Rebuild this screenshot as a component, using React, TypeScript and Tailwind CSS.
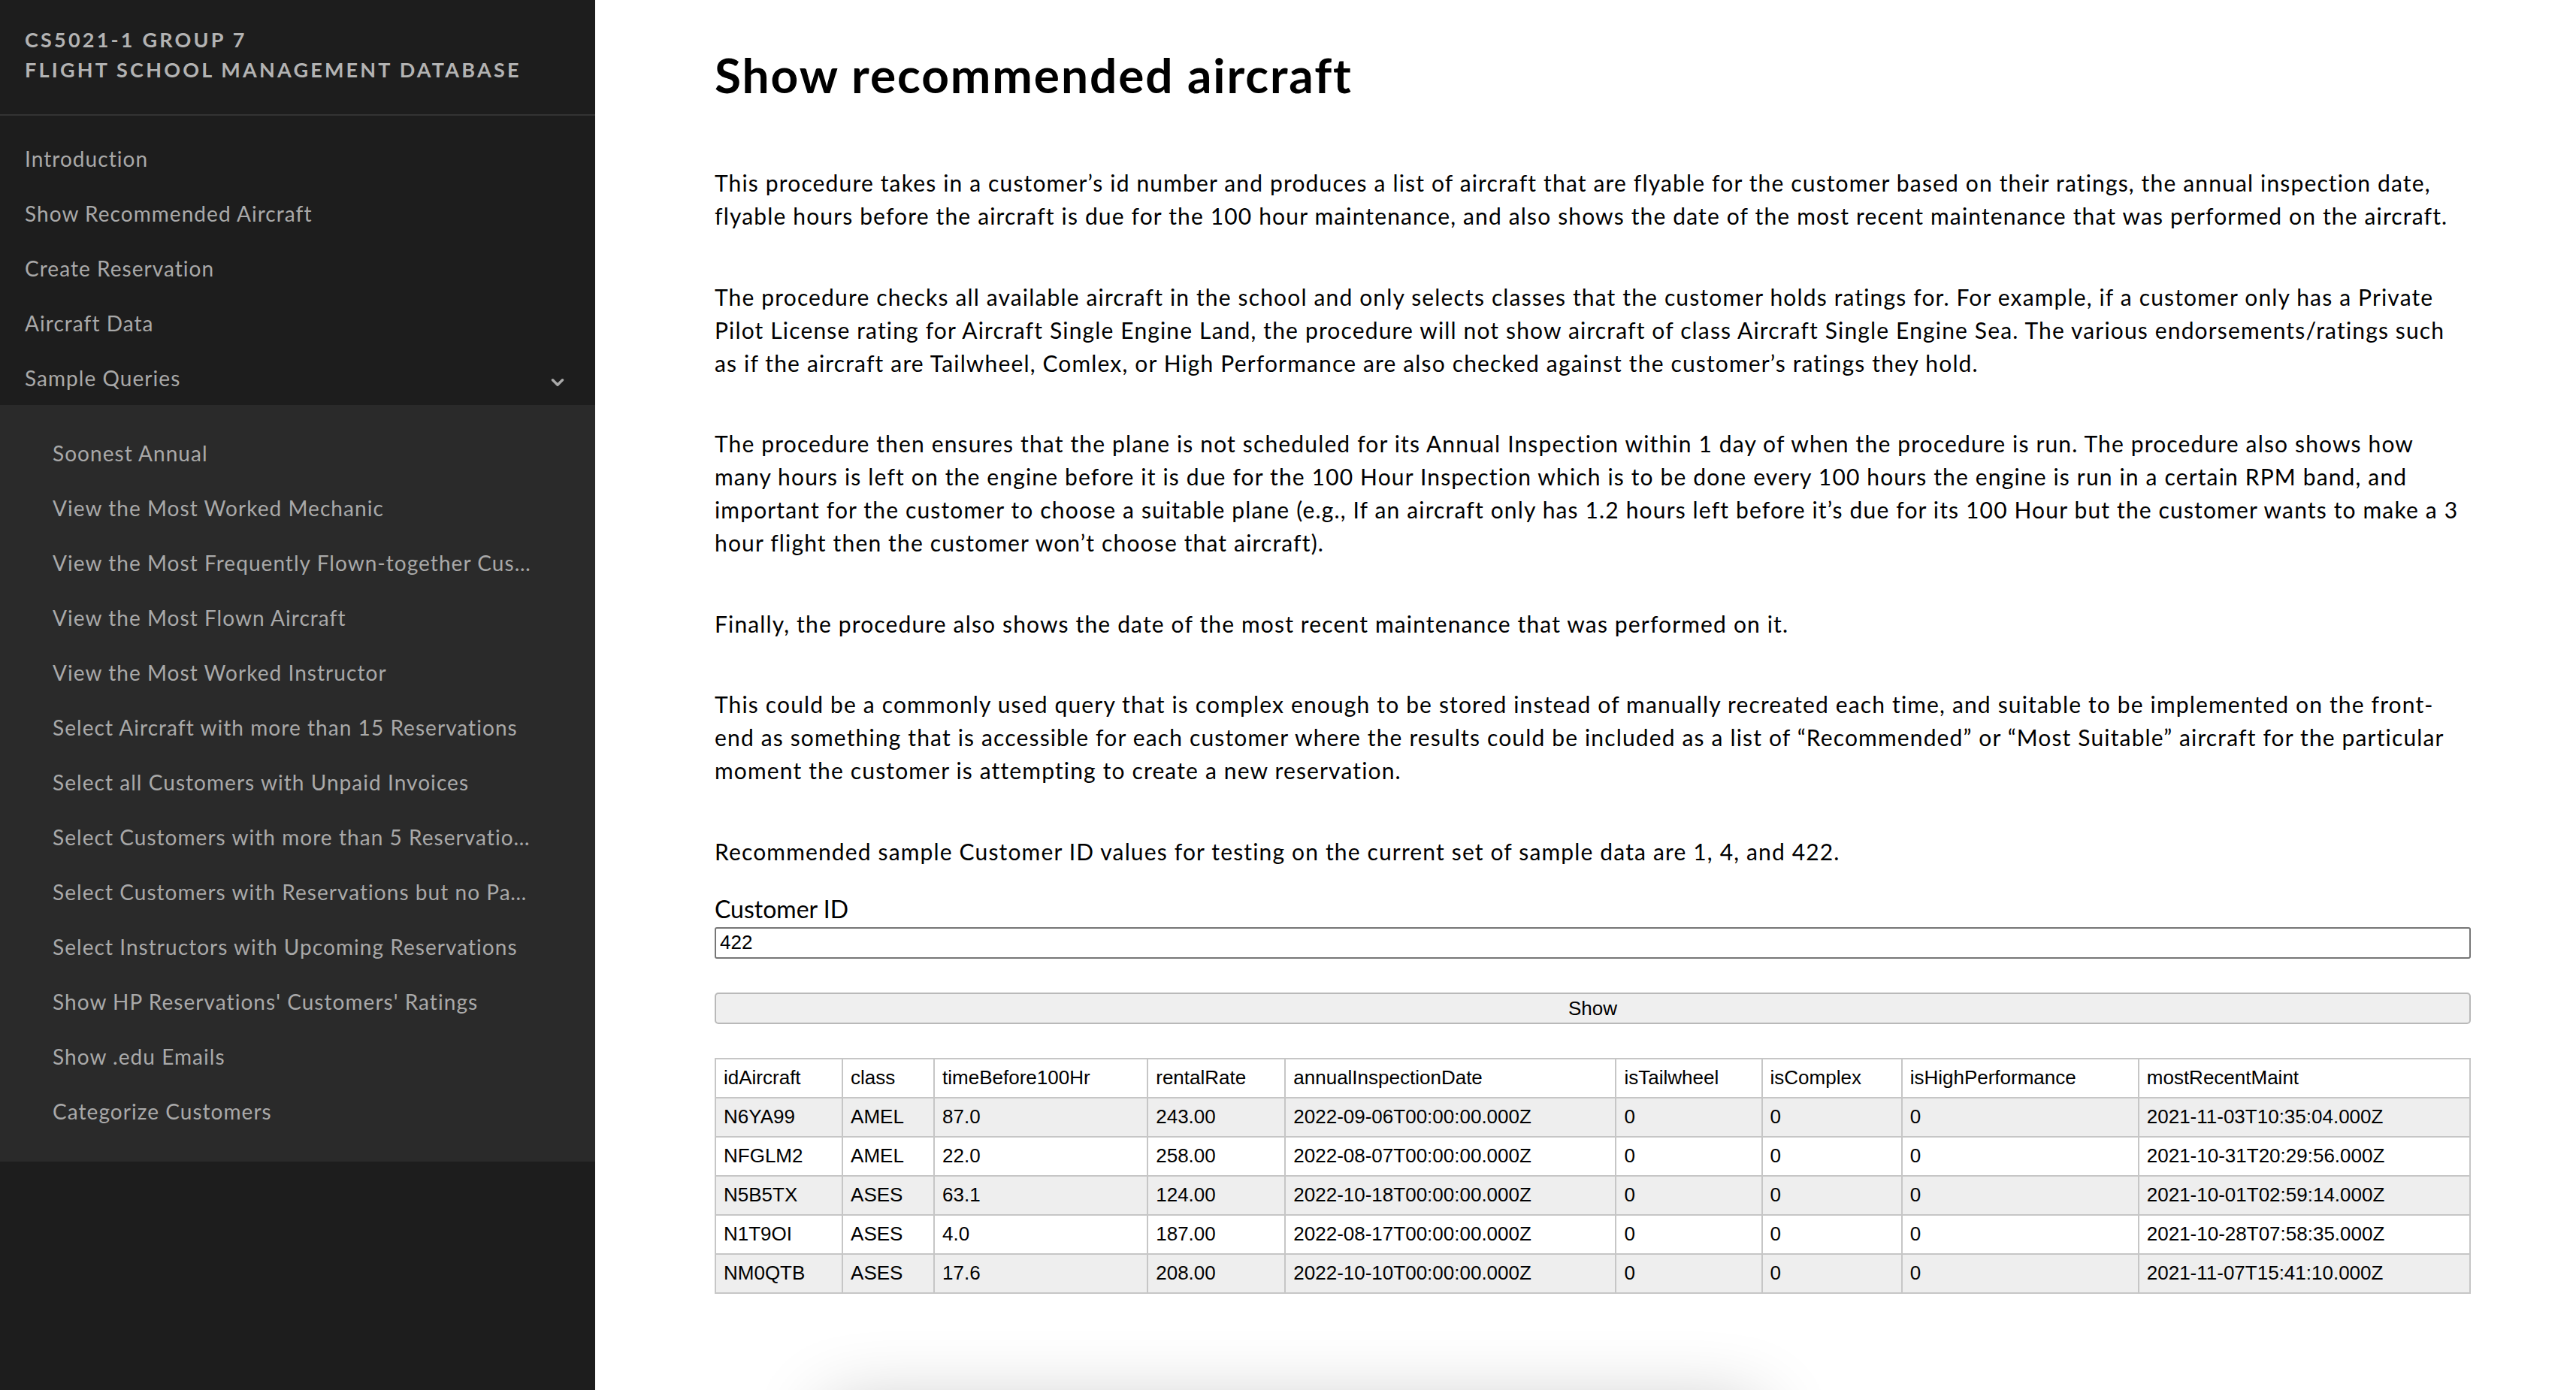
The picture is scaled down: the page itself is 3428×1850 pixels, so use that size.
import { ChevronDown } from "lucide-react";

const topLinks = [
  "Introduction",
  "Show Recommended Aircraft",
  "Create Reservation",
  "Aircraft Data",
];

const sampleQueries = [
  "Soonest Annual",
  "View the Most Worked Mechanic",
  "View the Most Frequently Flown-together Customers",
  "View the Most Flown Aircraft",
  "View the Most Worked Instructor",
  "Select Aircraft with more than 15 Reservations",
  "Select all Customers with Unpaid Invoices",
  "Select Customers with more than 5 Reservations",
  "Select Customers with Reservations but no Payments",
  "Select Instructors with Upcoming Reservations",
  "Show HP Reservations' Customers' Ratings",
  "Show .edu Emails",
  "Categorize Customers",
];

const columns: { key: string; width: number }[] = [
  { key: "idAircraft", width: 169 },
  { key: "class", width: 122 },
  { key: "timeBefore100Hr", width: 284 },
  { key: "rentalRate", width: 183 },
  { key: "annualInspectionDate", width: 440 },
  { key: "isTailwheel", width: 194 },
  { key: "isComplex", width: 186 },
  { key: "isHighPerformance", width: 315 },
  { key: "mostRecentMaint", width: 441 },
];

const rows = [
  ["N6YA99", "AMEL", "87.0", "243.00", "2022-09-06T00:00:00.000Z", "0", "0", "0", "2021-11-03T10:35:04.000Z"],
  ["NFGLM2", "AMEL", "22.0", "258.00", "2022-08-07T00:00:00.000Z", "0", "0", "0", "2021-10-31T20:29:56.000Z"],
  ["N5B5TX", "ASES", "63.1", "124.00", "2022-10-18T00:00:00.000Z", "0", "0", "0", "2021-10-01T02:59:14.000Z"],
  ["N1T9OI", "ASES", "4.0", "187.00", "2022-08-17T00:00:00.000Z", "0", "0", "0", "2021-10-28T07:58:35.000Z"],
  ["NM0QTB", "ASES", "17.6", "208.00", "2022-10-10T00:00:00.000Z", "0", "0", "0", "2021-11-07T15:41:10.000Z"],
];

const paragraphs = [
  "This procedure takes in a customer’s id number and produces a list of aircraft that are flyable for the customer based on their ratings, the annual inspection date, flyable hours before the aircraft is due for the 100 hour maintenance, and also shows the date of the most recent maintenance that was performed on the aircraft.",
  "The procedure checks all available aircraft in the school and only selects classes that the customer holds ratings for. For example, if a customer only has a Private Pilot License rating for Aircraft Single Engine Land, the procedure will not show aircraft of class Aircraft Single Engine Sea. The various endorsements/ratings such as if the aircraft are Tailwheel, Comlex, or High Performance are also checked against the customer’s ratings they hold.",
  "The procedure then ensures that the plane is not scheduled for its Annual Inspection within 1 day of when the procedure is run. The procedure also shows how many hours is left on the engine before it is due for the 100 Hour Inspection which is to be done every 100 hours the engine is run in a certain RPM band, and important for the customer to choose a suitable plane (e.g., If an aircraft only has 1.2 hours left before it’s due for its 100 Hour but the customer wants to make a 3 hour flight then the customer won’t choose that aircraft).",
  "Finally, the procedure also shows the date of the most recent maintenance that was performed on it.",
  "This could be a commonly used query that is complex enough to be stored instead of manually recreated each time, and suitable to be implemented on the front-end as something that is accessible for each customer where the results could be included as a list of “Recommended” or “Most Suitable” aircraft for the particular moment the customer is attempting to create a new reservation.",
];

const cell = "border-2 border-[#c6c6c6] px-[10px] text-left font-normal align-middle";

function Sidebar() {
  return (
    <aside className="w-[792px] shrink-0 bg-[#1d1d1d] h-full">
      <div className="px-[33px] pt-[33px] pb-[39px] border-b-2 border-[#333333] text-[27px] leading-[40px] font-bold uppercase tracking-[3.2px] text-[#b3b3b3]">
        <div>CS5021-1 Group 7</div>
        <div>Flight School Management Database</div>
      </div>
      <nav className="pt-[20px] text-[28px] tracking-[1.05px] text-[#a9a9a9]">
        {topLinks.map((label) => (
          <div key={label} className="h-[73px] flex items-center px-[33px]">
            {label}
          </div>
        ))}
        <div className="h-[73px] flex items-center justify-between pl-[33px] pr-[37px]">
          <span>Sample Queries</span>
          <ChevronDown className="w-[26px] h-[26px] mt-[12px]" strokeWidth={3.2} />
        </div>
        {/* sub-menu of Sample Queries, long titles end in an ellipsis */}
        <div className="bg-[#2a2a2a] pt-[27px] pb-[31px]">
          {sampleQueries.map((label) => (
            <div key={label} className="h-[73px] flex items-center pl-[70px] pr-[84px]">
              <span className="truncate">{label}</span>
            </div>
          ))}
        </div>
      </nav>
    </aside>
  );
}

export default function App() {
  return (
    <div className="flex h-screen overflow-hidden bg-white font-['Lato',sans-serif] text-black">
      <Sidebar />
      <main className="flex-1 min-w-0 pl-[159px] pr-[140px] pt-[61px]">
        <h1 className="text-[64px] leading-[77px] font-bold tracking-[1.9px] mb-[83px]">
          Show recommended aircraft
        </h1>
        {paragraphs.map((p) => (
          <p key={p.slice(0, 24)} className="text-[30px] leading-[44px] tracking-[1.15px] mb-[63.6px]">
            {p}
          </p>
        ))}
        <p className="text-[30px] leading-[44px] tracking-[1.15px] mb-[31px]">
          Recommended sample Customer ID values for testing on the current set of sample data are 1, 4, and 422.
        </p>
        <label className="block">
          <span className="block text-[32px] leading-[48px]">Customer ID</span>
          <input
            defaultValue="422"
            className="block w-full h-[42px] border-2 border-[#767676] rounded-[3px] px-[5px] text-[26px] font-['Liberation_Sans',Arial,sans-serif] outline-none"
          />
        </label>
        <button className="mt-[45px] w-full h-[42px] bg-[#efefef] border-2 border-[#b9b9b9] rounded-[5px] text-[26px] font-['Liberation_Sans',Arial,sans-serif]">
          Show
        </button>
        <table className="mt-[45px] w-full table-fixed border-collapse text-[26px] font-['Liberation_Sans',Arial,sans-serif]">
          <colgroup>
            {columns.map((c) => (
              <col key={c.key} style={{ width: c.width }} />
            ))}
          </colgroup>
          <thead>
            <tr className="h-[52px]">
              {columns.map((c) => (
                <th key={c.key} className={cell}>
                  {c.key}
                </th>
              ))}
            </tr>
          </thead>
          <tbody>
            {rows.map((r, i) => (
              <tr key={r[0]} className={`h-[52px] ${i % 2 === 0 ? "bg-[#eeeeee]" : "bg-white"}`}>
                {r.map((v, j) => (
                  <td key={j} className={cell}>
                    {v}
                  </td>
                ))}
              </tr>
            ))}
          </tbody>
        </table>
        {/* card just below the fold, only its shadow shows */}
        <div className="mt-[150px] ml-[150px] w-[1240px] h-[200px] bg-white shadow-[0_0_100px_rgba(0,0,0,0.24)]" />
      </main>
    </div>
  );
}
